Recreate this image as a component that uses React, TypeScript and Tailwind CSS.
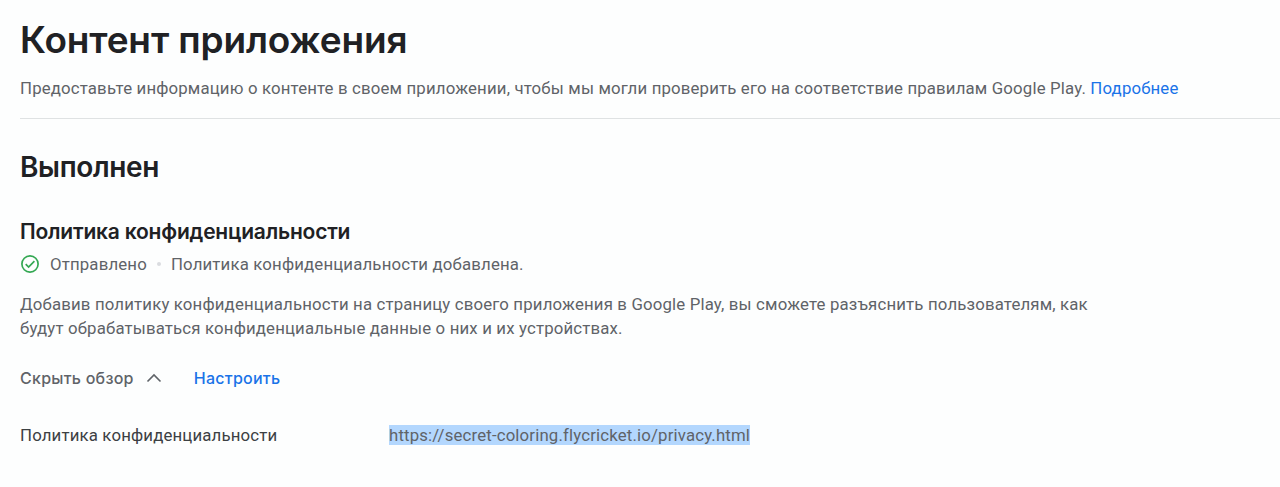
import { ReactNode } from 'react';

function Heading({ level, children }: { level: 1 | 2 | 3; children: ReactNode }) {
  const base = "font-['Inter',sans-serif] font-semibold text-[#202124] whitespace-nowrap";
  if (level === 1) return <h1 className={`${base} text-[37px] leading-[48px] tracking-[-0.15px]`}>{children}</h1>;
  if (level === 2) return <h2 className={`${base} text-[28px] leading-9 tracking-[-0.35px]`}>{children}</h2>;
  return <h3 className={`${base} text-[21px] leading-7 tracking-[-0.2px]`}>{children}</h3>;
}

function CheckIcon() {
  return (
    <svg viewBox="0 0 20 20" className="size-5 shrink-0 fill-none stroke-[#34a853]">
      <circle cx="10" cy="10" r="8.1" strokeWidth="1.7" />
      <path d="m5.7 10.1 2.9 2.9 5.8-5.8" strokeWidth="1.7" />
    </svg>
  );
}

export default function App() {
  return (
    <main className="h-[487px] w-full overflow-hidden bg-[#fdfefe] pl-5 pt-4 font-['Roboto',sans-serif] text-[16.8px] leading-6 tracking-[0.16px] text-[#5f6368]">
      <header className="h-[103px] border-b border-[#dfe2e3]">
        <Heading level={1}>Контент приложения</Heading>
        <p className="mt-3 whitespace-nowrap">
          Предоставьте информацию о контенте в своем приложении, чтобы мы могли проверить его на соответствие правилам Google Play.{' '}
          <a className="text-[#1a73e8]">Подробнее</a>
        </p>
      </header>
      <section className="pt-[30px]">
        <Heading level={2}>Выполнен</Heading>
        <div className="pt-[33px]">
          <Heading level={3}>Политика конфиденциальности</Heading>
          <div className="mt-[6px] flex items-center">
            <CheckIcon />
            <span className="ml-[10px]">Отправлено</span>
            <span className="mx-[10px] size-1 rounded-full bg-[#dadce0]" />
            <span>Политика конфиденциальности добавлена.</span>
          </div>
          <p className="mt-4 whitespace-nowrap">
            Добавив политику конфиденциальности на страницу своего приложения в Google Play, вы сможете разъяснить пользователям, как
            <br />
            будут обрабатываться конфиденциальные данные о них и их устройствах.
          </p>
          <div className="mt-[26px] flex items-center font-['Inter',sans-serif] text-[16px] font-medium tracking-[0.25px]">
            <button>Скрыть обзор</button>
            <svg viewBox="0 0 16 10" className="ml-[12px] h-[10px] w-4 fill-none stroke-[#5f6368]">
              <path d="m1.5 8.5 6.5-6.5 6.5 6.5" strokeWidth="1.6" />
            </svg>
            <button className="ml-[32px] text-[#1a73e8]">Настроить</button>
          </div>
          <dl className="mt-[33px] flex items-center">
            <dt className="w-[369px] text-[#3c4043]">Политика конфиденциальности</dt>
            <dd className="bg-[#b3d7fe] leading-[20px]">https://secret-coloring.flycricket.io/privacy.html</dd>
          </dl>
        </div>
      </section>
    </main>
  );
}
